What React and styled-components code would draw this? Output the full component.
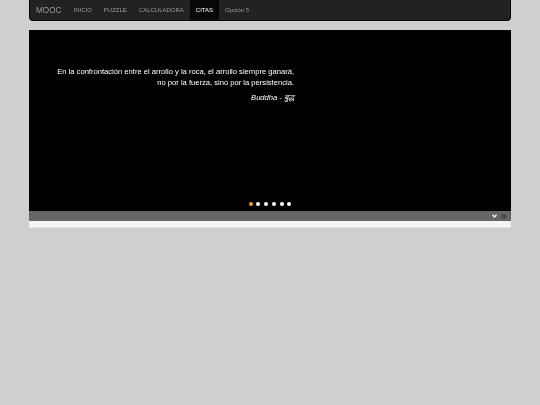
import React from 'react'
import styled, {createGlobalStyle} from 'styled-components'

const GlobalStyle = createGlobalStyle`
html, body {
	margin:0;
	padding:0;
	background-color:#cfcfcf;
	font-family:"Liberation Sans", Arial, sans-serif;
	-webkit-font-smoothing:antialiased;
}
`

const Page = styled.div`
width:482px;
margin:0 auto;
`

const Navbar = styled.div`
display:flex;
align-items:stretch;
height:21px;
background-color:#222222;
border:1px solid #080808;
border-top:none;
border-radius:0 0 4px 4px;
box-sizing:border-box;
padding-left:6px;
will-change:transform;
`

const Brand = styled.div`
display:flex;
align-items:center;
font-size:8.2px;
color:#999999;
margin-right:6px;
`

const NavItem = styled.div`
display:flex;
align-items:center;
padding:0 6px;
font-size:6px;
color:${p => (p.$active ? '#ffffff' : '#999999')};
background-color:${p => (p.$active ? '#080808' : 'transparent')};
text-transform:${p => (p.$plain ? 'none' : 'uppercase')};
`

const Slider = styled.div`
margin-top:9px;
background-color:#000000;
height:181px;
display:flex;
flex-direction:column;
`

const Caption = styled.div`
width:265px;
box-sizing:border-box;
padding-top:36px;
text-align:right;
color:#ffffff;
font-size:7.6px;
line-height:11px;
flex:1;
will-change:transform;
`

const Author = styled.div`
margin-top:4px;
font-style:italic;
`

const Dots = styled.div`
display:flex;
justify-content:center;
gap:3.7px;
padding-bottom:5px;
`

const Dot = styled.span`
width:4px;
height:4px;
border-radius:50%;
background-color:${p => (p.$active ? '#f0a030' : '#ffffff')};
`

const ControlBar = styled.div`
height:10px;
background-color:#666666;
display:flex;
align-items:center;
justify-content:flex-end;
gap:4px;
padding-right:5px;
`

const Strip = styled.div`
height:7px;
background-color:#f4f4f4;
border-bottom:1px solid #e4e4e4;
box-sizing:border-box;
`

const items = ['Inicio', 'Puzzle', 'Calculadora', 'Citas']

export default function App () {
	return (
		<>
			<GlobalStyle/>
			<Page>
				<Navbar>
					<Brand>MOOC</Brand>
					{items.map(item => <NavItem key={item} $active={item === 'Citas'}>{item}</NavItem>)}
					<NavItem $plain>Opción 5</NavItem>
				</Navbar>
				<Slider>
					<Caption>
						<div>En la confrontación entre el arrollo y la roca, el arrollo siempre ganará,</div>
						<div>no por la fuerza, sino por la persistencia.</div>
						<Author>Buddha - बुद्ध</Author>
					</Caption>
					<Dots>
						{[0, 1, 2, 3, 4, 5].map(i => <Dot key={i} $active={i === 0}/>)}
					</Dots>
				</Slider>
				<ControlBar>
					<svg width="5" height="4" viewBox="0 0 5 4">
						<path d="M0.5 0.8 L2.5 3 L4.5 0.8" stroke="#f2f2f2" strokeWidth="1.3" fill="none"/>
					</svg>
					<svg width="5" height="5" viewBox="0 0 5 5">
						<circle cx="2.5" cy="2.5" r="1.7" stroke="#333333" strokeWidth="1.1" fill="none"/>
					</svg>
				</ControlBar>
				<Strip/>
			</Page>
		</>
	)
}
